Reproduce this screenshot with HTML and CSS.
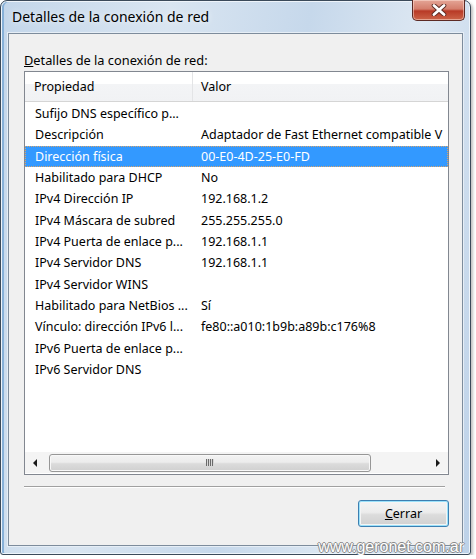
FILE: index.html
```html
<!DOCTYPE html>
<html lang="es">
<head>
    <meta charset="UTF-8">
    <title>Detalles de la conexión de red</title>
    <link rel="stylesheet" href="styles.css">
</head>
<body>
    <div class="window">
        <!-- barra de título -->
        <div class="titlebar">
            <span class="title">Detalles de la conexión de red</span>
            <button class="close" aria-label="Cerrar">
                <svg width="18" height="12" viewBox="0 0 18 12">
                    <path d="M4 1.5 L14 10.5 M14 1.5 L4 10.5" stroke="#5a2a22" stroke-width="4.6" stroke-linecap="round"/>
                    <path d="M4 1.5 L14 10.5 M14 1.5 L4 10.5" stroke="#ffffff" stroke-width="2.8" stroke-linecap="round"/>
                </svg>
            </button>
        </div>

        <div class="client">
            <div class="caption"><u>D</u>etalles de la conexión de red:</div>

            <div class="listview">
                <div class="lv-header">
                    <div class="col col-prop">Propiedad</div>
                    <div class="col col-val">Valor</div>
                </div>
                <div class="lv-body">
                    <div class="lv-row"><div class="col col-prop">Sufijo DNS específico p...</div><div class="col col-val"></div></div>
                    <div class="lv-row"><div class="col col-prop">Descripción</div><div class="col col-val">Adaptador de Fast Ethernet compatible V</div></div>
                    <div class="lv-row selected"><div class="col col-prop">Dirección física</div><div class="col col-val">00-E0-4D-25-E0-FD</div></div>
                    <div class="lv-row"><div class="col col-prop">Habilitado para DHCP</div><div class="col col-val">No</div></div>
                    <div class="lv-row"><div class="col col-prop">IPv4 Dirección IP</div><div class="col col-val">192.168.1.2</div></div>
                    <div class="lv-row"><div class="col col-prop">IPv4 Máscara de subred</div><div class="col col-val">255.255.255.0</div></div>
                    <div class="lv-row"><div class="col col-prop">IPv4 Puerta de enlace p...</div><div class="col col-val">192.168.1.1</div></div>
                    <div class="lv-row"><div class="col col-prop">IPv4 Servidor DNS</div><div class="col col-val">192.168.1.1</div></div>
                    <div class="lv-row"><div class="col col-prop">IPv4 Servidor WINS</div><div class="col col-val"></div></div>
                    <div class="lv-row"><div class="col col-prop">Habilitado para NetBios ...</div><div class="col col-val">Sí</div></div>
                    <div class="lv-row"><div class="col col-prop">Vínculo: dirección IPv6 l...</div><div class="col col-val">fe80::a010:1b9b:a89b:c176%8</div></div>
                    <div class="lv-row"><div class="col col-prop">IPv6 Puerta de enlace p...</div><div class="col col-val"></div></div>
                    <div class="lv-row"><div class="col col-prop">IPv6 Servidor DNS</div><div class="col col-val"></div></div>
                </div>
                <div class="hscroll">
                    <span class="arrow arrow-left"></span>
                    <div class="track">
                        <div class="thumb"><span class="grip"></span></div>
                    </div>
                    <span class="arrow arrow-right"></span>
                </div>
            </div>

            <div class="sep"></div>

            <div class="actions">
                <button class="btn"><u>C</u>errar</button>
            </div>
        </div>

        <div class="watermark">www.geronet.com.ar</div>
    </div>
</body>
</html>
```

FILE: styles.css
```css
body {
    margin: 0;
    background: #ffffff;
    font-family: "Noto Sans", "Open Sans", sans-serif;
}
.window {
    position: relative;
    width: 471px;
    height: 555px;
    box-sizing: border-box;
    border: 1px solid #3b4a5a;
    border-radius: 7px 7px 3px 3px;
    background: linear-gradient(100deg, #c3d6ea 0%, #d9e5f1 30%, #c6d8eb 55%, #dce7f2 75%, #bcd1e8 100%);
    box-shadow: inset 0 0 0 1px #eef4fa, inset 2px 0 0 1px #86b0d8, 2px 2px 3px rgba(0, 0, 0, 0.25);
    display: flex;
    flex-direction: column;
}
.titlebar {
    height: 32px;
    display: flex;
    align-items: flex-start;
    justify-content: space-between;
}
.title {
    padding: 6px 0 0 11px;
    font-size: 14px;
    color: #000000;
    text-shadow: 0 0 6px rgba(255, 255, 255, 0.9);
}
.close {
    width: 53px;
    height: 21px;
    margin: -1px 5px 0 0;
    padding: 0;
    border: 1px solid #5c2a24;
    border-top: none;
    border-radius: 0 0 5px 5px;
    background: linear-gradient(to bottom, #e4a596 0%, #d47e6c 45%, #b83a26 55%, #cc6448 100%);
    box-shadow: inset 0 0 0 1px rgba(255, 230, 220, 0.5);
    display: flex;
    align-items: center;
    justify-content: center;
}
.client {
    flex: 1;
    margin: 0 7px 8px 7px;
    border: 1px solid #7d8c9c;
    background: #f0f0f0;
    box-shadow: 0 0 0 1px #e6eef6;
    padding: 18px 13px 0 15px;
    display: flex;
    flex-direction: column;
    font-size: 12.5px;
    color: #000000;
}
.caption {
    height: 16px;
    line-height: 16px;
    margin-bottom: 3px;
    font-size: 12.8px;
}
.listview {
    height: 404px;
    box-sizing: border-box;
    border: 1px solid #828790;
    background: #ffffff;
    display: flex;
    flex-direction: column;
}
.lv-header {
    height: 29px;
    flex-shrink: 0;
    display: flex;
    background: linear-gradient(to bottom, #ffffff 0%, #ffffff 42%, #f3f4f6 43%, #f1f2f4 100%);
    border-bottom: 1px solid #d5d5d5;
    line-height: 29px;
}
.lv-header .col-prop {
    border-right: 1px solid #e3e4e6;
}
.lv-body {
    flex: 1;
    padding-top: 1px;
    overflow: hidden;
}
.lv-row {
    height: 21.33px;
    line-height: 20px;
    display: flex;
    box-sizing: border-box;
    border: 1px solid transparent;
}
.lv-row.selected {
    background: #3399ff;
    color: #ffffff;
    border: 1px dotted #d9a46a;
}
.col {
    white-space: nowrap;
    overflow: hidden;
}
.col-prop {
    width: 168px;
    flex-shrink: 0;
    box-sizing: border-box;
    padding-left: 9px;
}
.col-val {
    flex: 1;
    padding-left: 8px;
}
.lv-row .col-prop {
    width: 167px;
}
.hscroll {
    height: 21px;
    margin-bottom: 1px;
    flex-shrink: 0;
    display: flex;
    align-items: center;
    background: #f4f4f4;
}
.arrow {
    width: 23px;
    height: 21px;
    position: relative;
}
.arrow::after {
    content: "";
    position: absolute;
    top: 7px;
    border-top: 4px solid transparent;
    border-bottom: 4px solid transparent;
}
.arrow-left::after {
    left: 8px;
    border-right: 4px solid #1a1a1a;
}
.arrow-right::after {
    left: 11px;
    border-left: 4px solid #1a1a1a;
}
.track {
    flex: 1;
    height: 21px;
    display: flex;
    align-items: center;
}
.thumb {
    width: 322px;
    height: 18px;
    margin-left: 1px;
    box-sizing: border-box;
    border: 1px solid #979797;
    border-radius: 3px;
    background: linear-gradient(to bottom, #f3f3f3 0%, #ececec 45%, #dbdbdb 55%, #d0d0d0 100%);
    box-shadow: inset 0 0 0 1px #f8f8f8;
    display: flex;
    align-items: center;
    justify-content: center;
}
.grip {
    width: 8px;
    height: 7px;
    background: repeating-linear-gradient(to right, #6a6a6a 0, #6a6a6a 1px, #d8d8d8 1px, #d8d8d8 2px);
}
.sep {
    height: 1px;
    margin: 11px 4px 0 0;
    background: #a0a0a0;
    border-bottom: 1px solid #ffffff;
}
.actions {
    display: flex;
    justify-content: flex-end;
    margin-top: 12px;
}
.btn {
    width: 91px;
    height: 27px;
    padding: 0;
    border: 1px solid #3c7fb1;
    border-radius: 3px;
    box-shadow: inset 0 0 0 1px #9be1fa, inset 0 0 0 2px #f4f4f4;
    background: linear-gradient(to bottom, #f4f4f4 0%, #ececec 45%, #dcdcdc 55%, #d0d0d0 100%);
    font-family: "Noto Sans", "Open Sans", sans-serif;
    font-size: 12.5px;
    color: #000000;
}
.watermark {
    position: absolute;
    right: 6px;
    bottom: -2px;
    font-family: "Liberation Sans", sans-serif;
    font-size: 16px;
    color: #ffffff;
    text-shadow: -1px 0 #8a8a8a, 1px 0 #8a8a8a, 0 -1px #8a8a8a, 0 1px #8a8a8a;
}
```
